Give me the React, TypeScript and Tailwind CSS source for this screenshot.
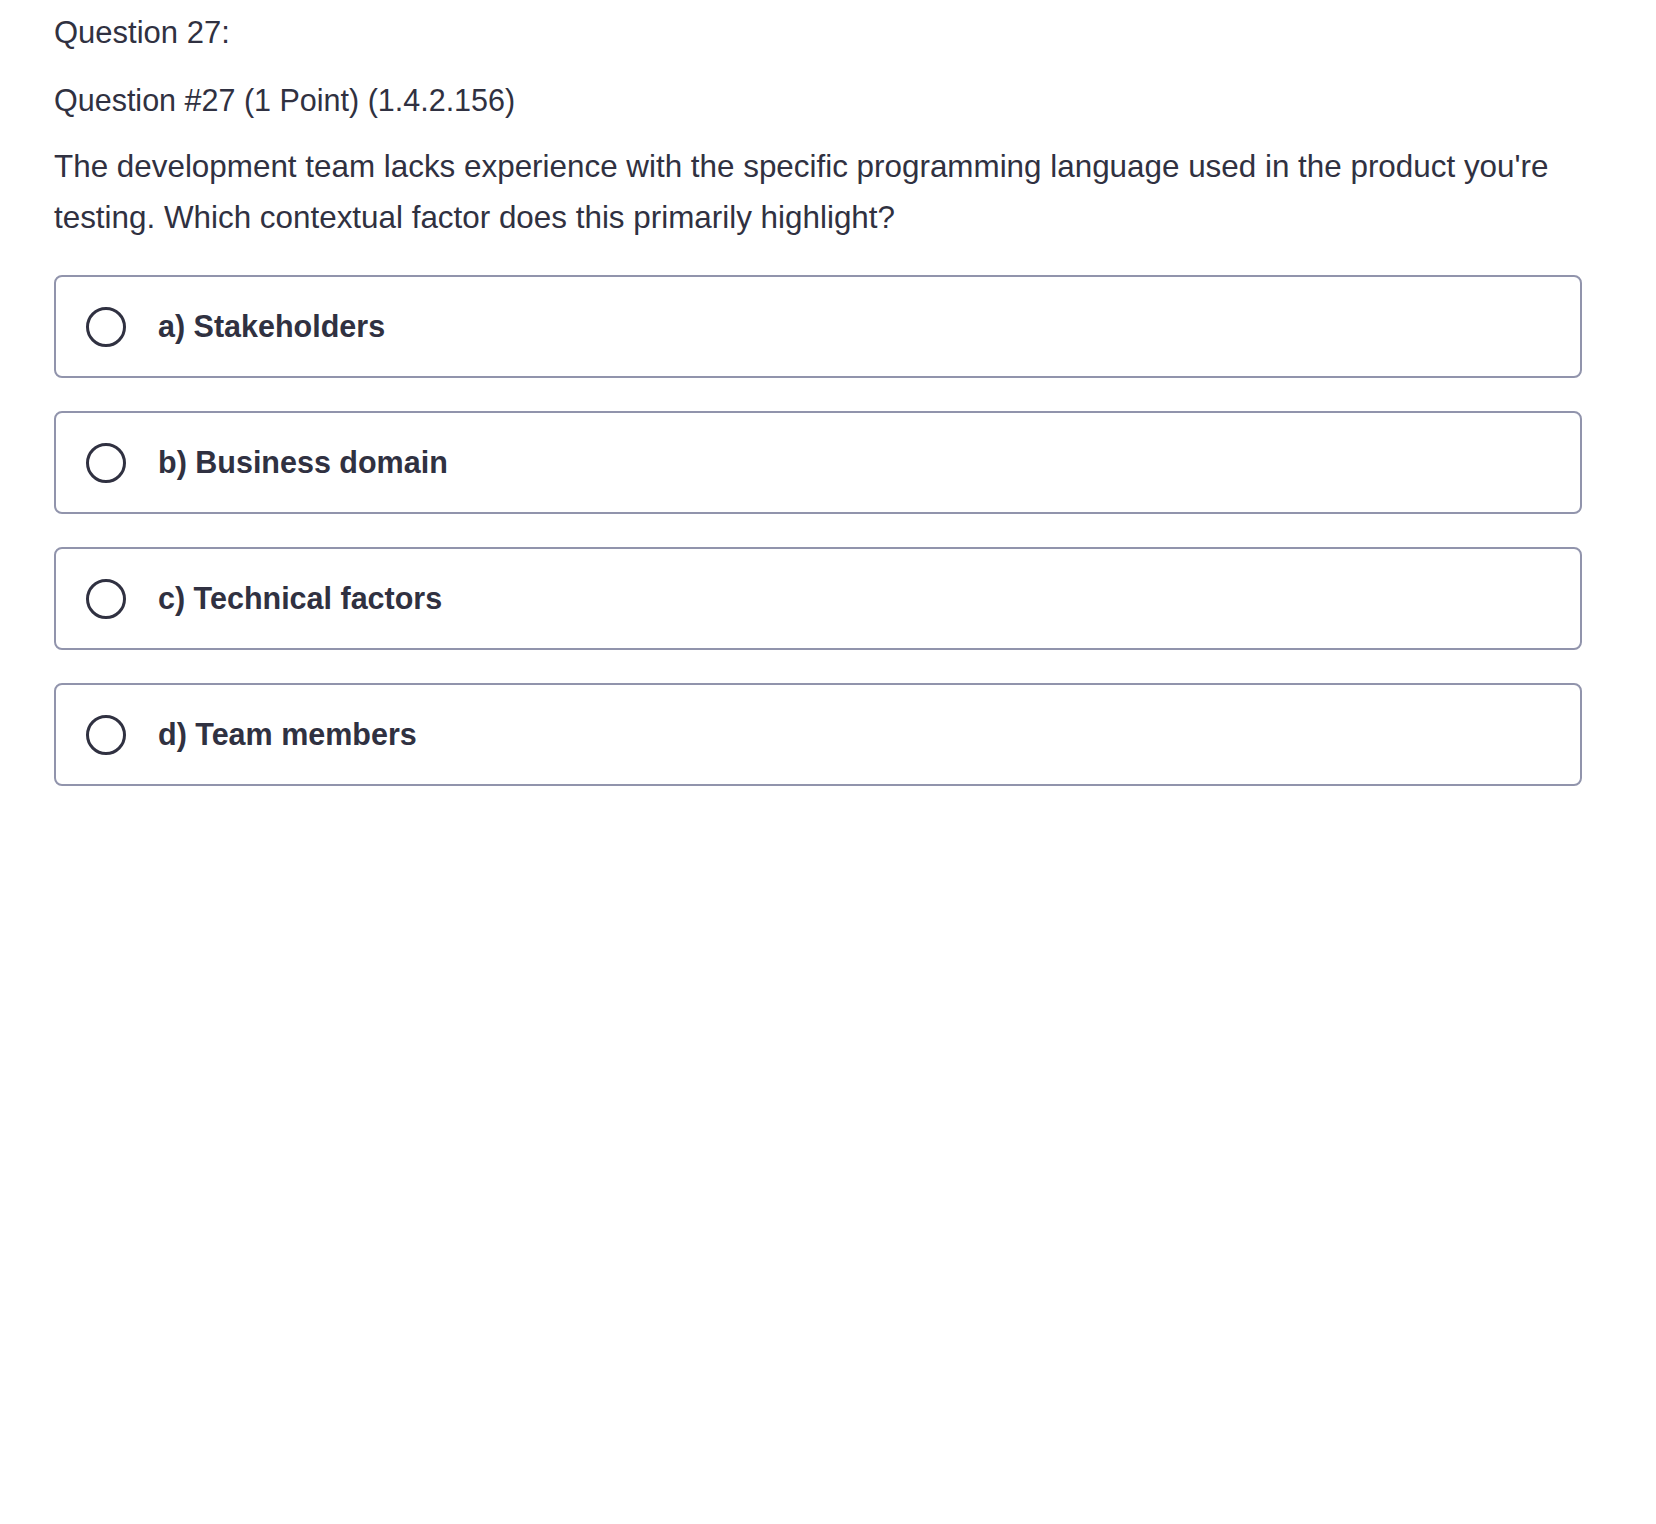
import React from 'react';

const options = [
  'a) Stakeholders',
  'b) Business domain',
  'c) Technical factors',
  'd) Team members',
];

export default function App() {
  return (
    <div
      className="min-h-[1524px] bg-white text-[#303141] pl-[54px] pr-[74px] pt-[7px]"
      style={{ fontFamily: '"Liberation Sans", Arial, sans-serif' }}
    >
      <div className="text-[31px] leading-[52px]">Question 27:</div>
      <div className="text-[30.5px] leading-[52px] mt-[15px] font-medium">
        Question #27 (1 Point) (1.4.2.156)
      </div>
      <p className="text-[31.4px] leading-[51px] mt-[15px]">
        The development team lacks experience with the specific programming language used in the product you're
        testing. Which contextual factor does this primarily highlight?
      </p>

      <div className="mt-[32px] flex flex-col gap-[33px]">
        {options.map((opt) => (
          <label
            key={opt}
            className="flex items-center h-[103px] border-2 border-[#9194ac] rounded-[8px] pl-[30px] cursor-pointer"
          >
            <span className="w-[40px] h-[40px] rounded-full border-[3px] border-[#303141] shrink-0" />
            <span className="ml-[32px] text-[30.5px] font-bold">{opt}</span>
          </label>
        ))}
      </div>
    </div>
  );
}
